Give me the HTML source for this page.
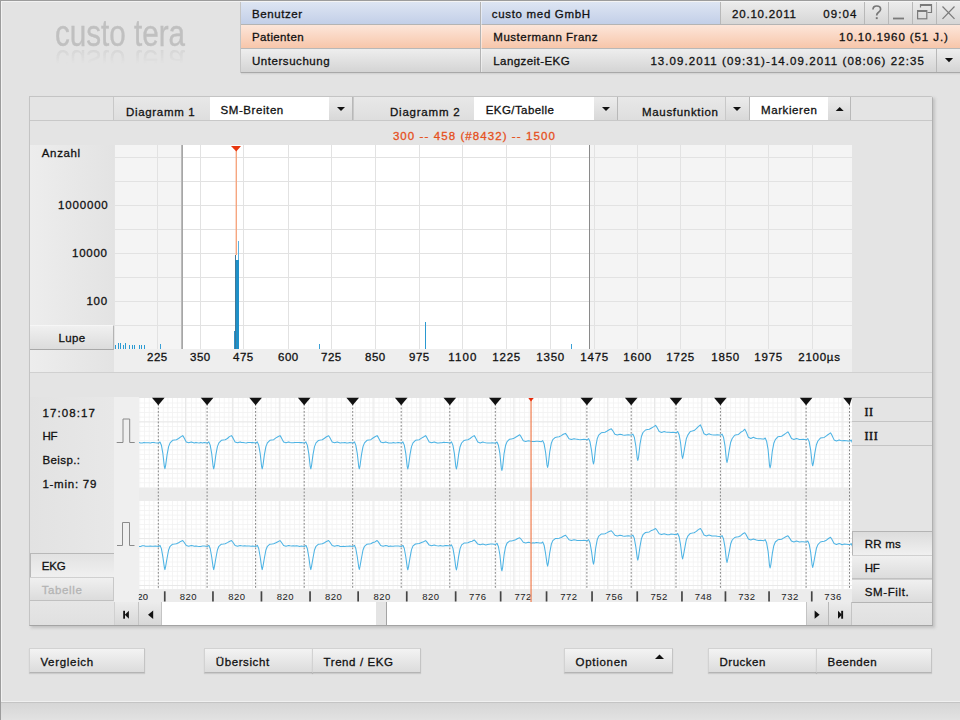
<!DOCTYPE html><html><head><meta charset="utf-8"><style>
html,body{margin:0;padding:0;}
body{width:960px;height:720px;overflow:hidden;position:relative;background:#e3e3e3;font-family:"Liberation Sans",sans-serif;}
.t{position:absolute;white-space:nowrap;-webkit-text-stroke:0.3px currentColor;}
.r{position:absolute;box-sizing:border-box;}
svg{position:absolute;left:0;top:0;}
</style></head><body>
<div class="r" style="left:0px;top:0px;width:960px;height:1px;background:#9c9c9c"></div>
<div class="r" style="left:0px;top:1px;width:960px;height:1px;background:#f2f2f2"></div>
<div class="r" style="left:0px;top:0px;width:1px;height:720px;background:#9c9c9c"></div>
<div class="r" style="left:1px;top:1px;width:1px;height:719px;background:#f2f2f2"></div>
<div class="r" style="left:1px;top:701px;width:959px;height:1px;background:#f0f0f0"></div>
<div class="r" style="left:1px;top:702px;width:959px;height:1px;background:#c4c4c4"></div>
<div class="r" style="left:1px;top:703px;width:959px;height:17px;background:linear-gradient(#d6d6d6,#e2e2e2)"></div>
<div class="t" style="left:55px;top:12px;font-size:36px;line-height:44px;color:#c0c0c0;transform:scaleX(0.823);transform-origin:0 0;-webkit-text-stroke:0.35px #c0c0c0">custo tera</div>
<div class="t" style="left:55px;top:12px;font-size:36px;line-height:44px;color:#c0c0c0;transform:scaleX(0.823) scaleY(-0.9);transform-origin:0 36px;opacity:0.38;-webkit-text-stroke:0;-webkit-mask-image:linear-gradient(to bottom,rgba(0,0,0,0) 0%,rgba(0,0,0,0) 40%,rgba(0,0,0,1) 78%)">custo tera</div>
<div class="r" style="left:241px;top:1px;width:719px;height:1px;background:#f4f4f4"></div>
<div class="r" style="left:241px;top:2px;width:239px;height:22px;background:linear-gradient(#dde5f3,#c3cfe8)"></div>
<div class="r" style="left:481px;top:2px;width:240px;height:22px;background:linear-gradient(#dde5f3,#c3cfe8)"></div>
<div class="r" style="left:721px;top:2px;width:144px;height:22px;background:linear-gradient(#ececec,#d6d6d6)"></div>
<div class="r" style="left:865px;top:2px;width:24px;height:22px;background:linear-gradient(#ececec,#d6d6d6)"></div>
<div class="r" style="left:889px;top:2px;width:24px;height:22px;background:linear-gradient(#ececec,#d6d6d6)"></div>
<div class="r" style="left:913px;top:2px;width:24px;height:22px;background:linear-gradient(#ececec,#d6d6d6)"></div>
<div class="r" style="left:937px;top:2px;width:23px;height:22px;background:linear-gradient(#ececec,#d6d6d6)"></div>
<div class="r" style="left:720px;top:2px;width:1px;height:22px;background:#b8b8b8"></div>
<div class="r" style="left:864px;top:2px;width:1px;height:22px;background:#b8b8b8"></div>
<div class="r" style="left:888px;top:2px;width:1px;height:22px;background:#b8b8b8"></div>
<div class="r" style="left:912px;top:2px;width:1px;height:22px;background:#b8b8b8"></div>
<div class="r" style="left:936px;top:2px;width:1px;height:22px;background:#b8b8b8"></div>
<div class="r" style="left:241px;top:24px;width:719px;height:1px;background:#b4b4b4"></div>
<div class="r" style="left:241px;top:25px;width:719px;height:23px;background:linear-gradient(#fde6da,#f7c6aa)"></div>
<div class="r" style="left:241px;top:48px;width:719px;height:1px;background:#b8b8b8"></div>
<div class="r" style="left:241px;top:49px;width:719px;height:23px;background:linear-gradient(#eeeeee,#d4d4d4)"></div>
<div class="r" style="left:936px;top:49px;width:1px;height:23px;background:#b8b8b8"></div>
<div class="r" style="left:241px;top:72px;width:719px;height:1px;background:#a8a8a8"></div>
<div class="r" style="left:241px;top:73px;width:719px;height:2px;background:linear-gradient(#cfcfcf,#e3e3e3)"></div>
<div class="r" style="left:240px;top:2px;width:1px;height:71px;background:#c4c4c4"></div>
<div class="r" style="left:480px;top:2px;width:1px;height:70px;background:#b4b4b4"></div>
<div class="r" style="left:481px;top:2px;width:1px;height:70px;background:rgba(255,255,255,0.45)"></div>
<div class="t" style="left:252.00px;top:9.00px;font-size:11.5px;line-height:11.5px;letter-spacing:0.571px;color:#111;font-weight:400;">Benutzer</div>
<div class="t" style="left:252.00px;top:32.00px;font-size:11.5px;line-height:11.5px;letter-spacing:0.375px;color:#111;font-weight:400;">Patienten</div>
<div class="t" style="left:252.00px;top:56.00px;font-size:11.5px;line-height:11.5px;letter-spacing:0.545px;color:#111;font-weight:400;">Untersuchung</div>
<div class="t" style="left:491.70px;top:8.50px;font-size:11.5px;line-height:11.5px;letter-spacing:0.692px;color:#111;font-weight:400;">custo med GmbH</div>
<div class="t" style="left:493.30px;top:31.80px;font-size:11.5px;line-height:11.5px;letter-spacing:0.513px;color:#111;font-weight:400;">Mustermann Franz</div>
<div class="t" style="left:493.30px;top:55.70px;font-size:11.5px;line-height:11.5px;letter-spacing:0.427px;color:#111;font-weight:400;">Langzeit-EKG</div>
<div class="t" style="left:732.00px;top:8.50px;font-size:11.5px;line-height:11.5px;letter-spacing:0.800px;color:#111;font-weight:400;">20.10.2011</div>
<div class="t" style="left:823.30px;top:8.50px;font-size:11.5px;line-height:11.5px;letter-spacing:1.075px;color:#111;font-weight:400;">09:04</div>
<div class="t" style="left:839.10px;top:31.80px;font-size:11.5px;line-height:11.5px;letter-spacing:0.906px;color:#111;font-weight:400;">10.10.1960 (51 J.)</div>
<div class="t" style="left:650.40px;top:55.70px;font-size:11.5px;line-height:11.5px;letter-spacing:1.071px;color:#111;font-weight:400;">13.09.2011 (09:31)-14.09.2011 (08:06) 22:35</div>
<div class="r" style="left:31px;top:98px;width:904px;height:530px;background:#c2c2c2;filter:blur(1.5px)"></div>
<div class="r" style="left:29px;top:96px;width:904px;height:530px;background:#e4e4e4;border:1px solid #c4c4c4;border-right-color:#b0b0b0;border-bottom-color:#a4a4a4;border-top-right-radius:3px"></div>
<div class="r" style="left:30px;top:97px;width:902px;height:24px;background:#e4e4e4"></div>
<div class="r" style="left:30px;top:120px;width:902px;height:1px;background:#c8c8c8"></div>
<div class="r" style="left:113px;top:97px;width:1px;height:24px;background:#c8c8c8"></div>
<div class="r" style="left:114px;top:97px;width:96px;height:23px;background:linear-gradient(#e8e8e8,#dedede)"></div>
<div class="r" style="left:210px;top:97px;width:119px;height:23px;background:#fff"></div>
<div class="r" style="left:329px;top:97px;width:24px;height:23px;background:linear-gradient(#ececec,#d8d8d8);border-right:1px solid #b8b8b8"></div>
<div class="r" style="left:353px;top:97px;width:1px;height:23px;background:#c8c8c8"></div>
<div class="r" style="left:354px;top:97px;width:120px;height:23px;background:linear-gradient(#e8e8e8,#dedede)"></div>
<div class="r" style="left:474px;top:97px;width:120px;height:23px;background:#fff"></div>
<div class="r" style="left:594px;top:97px;width:24px;height:23px;background:linear-gradient(#ececec,#d8d8d8);border-right:1px solid #b8b8b8"></div>
<div class="r" style="left:618px;top:97px;width:107px;height:23px;background:linear-gradient(#e8e8e8,#dedede)"></div>
<div class="r" style="left:725px;top:97px;width:25px;height:23px;background:linear-gradient(#ececec,#d8d8d8);border-left:1px solid #c8c8c8;border-right:1px solid #b8b8b8"></div>
<div class="r" style="left:750px;top:97px;width:78px;height:23px;background:#fff"></div>
<div class="r" style="left:828px;top:97px;width:23px;height:23px;background:linear-gradient(#ececec,#d8d8d8);border-right:1px solid #b8b8b8"></div>
<div class="t" style="left:126.00px;top:107.00px;font-size:11.5px;line-height:11.5px;letter-spacing:0.667px;color:#111;font-weight:400;">Diagramm 1</div>
<div class="t" style="left:220.50px;top:104.75px;font-size:11.5px;line-height:11.5px;letter-spacing:0.583px;color:#111;font-weight:400;">SM-Breiten</div>
<div class="t" style="left:390.00px;top:107.00px;font-size:11.5px;line-height:11.5px;letter-spacing:0.778px;color:#111;font-weight:400;">Diagramm 2</div>
<div class="t" style="left:485.75px;top:104.75px;font-size:11.5px;line-height:11.5px;letter-spacing:0.425px;color:#111;font-weight:400;">EKG/Tabelle</div>
<div class="t" style="left:642.00px;top:106.70px;font-size:11.5px;line-height:11.5px;letter-spacing:0.682px;color:#111;font-weight:400;">Mausfunktion</div>
<div class="t" style="left:761.00px;top:104.75px;font-size:11.5px;line-height:11.5px;letter-spacing:0.588px;color:#111;font-weight:400;">Markieren</div>
<div class="t" style="left:392.90px;top:131.20px;font-size:11.5px;line-height:11.5px;letter-spacing:1.080px;color:#e5501c;font-weight:400;">300 -- 458 (#8432) -- 1500</div>
<div class="r" style="left:30px;top:145px;width:84px;height:228px;background:linear-gradient(90deg,#ededed,#e3e3e3)"></div>
<div class="r" style="left:115px;top:145px;width:67px;height:204px;background:#f4f4f4"></div>
<div class="r" style="left:182px;top:145px;width:407px;height:204px;background:#fff"></div>
<div class="r" style="left:589px;top:145px;width:263px;height:204px;background:#f4f4f4"></div>
<div class="r" style="left:115px;top:157px;width:737px;height:1px;background:#e2e2e2"></div>
<div class="r" style="left:115px;top:181px;width:737px;height:1px;background:#e2e2e2"></div>
<div class="r" style="left:115px;top:205px;width:737px;height:1px;background:#e2e2e2"></div>
<div class="r" style="left:115px;top:229px;width:737px;height:1px;background:#e2e2e2"></div>
<div class="r" style="left:115px;top:253px;width:737px;height:1px;background:#e2e2e2"></div>
<div class="r" style="left:115px;top:277px;width:737px;height:1px;background:#e2e2e2"></div>
<div class="r" style="left:115px;top:301px;width:737px;height:1px;background:#e2e2e2"></div>
<div class="r" style="left:115px;top:325px;width:737px;height:1px;background:#e2e2e2"></div>
<div class="r" style="left:157px;top:145px;width:1px;height:204px;background:#e2e2e2"></div>
<div class="r" style="left:200px;top:145px;width:1px;height:204px;background:#e2e2e2"></div>
<div class="r" style="left:243px;top:145px;width:1px;height:204px;background:#e2e2e2"></div>
<div class="r" style="left:288px;top:145px;width:1px;height:204px;background:#e2e2e2"></div>
<div class="r" style="left:331px;top:145px;width:1px;height:204px;background:#e2e2e2"></div>
<div class="r" style="left:375px;top:145px;width:1px;height:204px;background:#e2e2e2"></div>
<div class="r" style="left:419px;top:145px;width:1px;height:204px;background:#e2e2e2"></div>
<div class="r" style="left:462px;top:145px;width:1px;height:204px;background:#e2e2e2"></div>
<div class="r" style="left:506px;top:145px;width:1px;height:204px;background:#e2e2e2"></div>
<div class="r" style="left:550px;top:145px;width:1px;height:204px;background:#e2e2e2"></div>
<div class="r" style="left:594px;top:145px;width:1px;height:204px;background:#e2e2e2"></div>
<div class="r" style="left:637px;top:145px;width:1px;height:204px;background:#e2e2e2"></div>
<div class="r" style="left:680px;top:145px;width:1px;height:204px;background:#e2e2e2"></div>
<div class="r" style="left:725px;top:145px;width:1px;height:204px;background:#e2e2e2"></div>
<div class="r" style="left:768px;top:145px;width:1px;height:204px;background:#e2e2e2"></div>
<div class="r" style="left:812px;top:145px;width:1px;height:204px;background:#e2e2e2"></div>
<div class="r" style="left:181px;top:145px;width:2px;height:204px;background:linear-gradient(90deg,#c4c4c4,#9c9c9c)"></div>
<div class="r" style="left:589px;top:145px;width:1px;height:204px;background:#8a8a8a"></div>
<div class="r" style="left:115px;top:345px;width:1.4px;height:4px;background:#2a9ad2"></div>
<div class="r" style="left:118px;top:343px;width:1.4px;height:6px;background:#2a9ad2"></div>
<div class="r" style="left:120px;top:343px;width:1.4px;height:6px;background:#2a9ad2"></div>
<div class="r" style="left:122.5px;top:345px;width:1.4px;height:4px;background:#2a9ad2"></div>
<div class="r" style="left:125px;top:343px;width:1.4px;height:6px;background:#2a9ad2"></div>
<div class="r" style="left:128.5px;top:345px;width:1.4px;height:4px;background:#2a9ad2"></div>
<div class="r" style="left:132px;top:345px;width:1.4px;height:4px;background:#2a9ad2"></div>
<div class="r" style="left:134px;top:345px;width:1.4px;height:4px;background:#2a9ad2"></div>
<div class="r" style="left:139px;top:345px;width:1.4px;height:4px;background:#2a9ad2"></div>
<div class="r" style="left:141px;top:345px;width:1.4px;height:4px;background:#2a9ad2"></div>
<div class="r" style="left:143.5px;top:345px;width:1.4px;height:4px;background:#2a9ad2"></div>
<div class="r" style="left:160px;top:344px;width:1px;height:5px;background:#3aa0d6"></div>
<div class="r" style="left:319px;top:344px;width:1px;height:5px;background:#3aa0d6"></div>
<div class="r" style="left:425px;top:322px;width:1px;height:27px;background:#2a98d0"></div>
<div class="r" style="left:571px;top:344px;width:1px;height:5px;background:#3aa0d6"></div>
<div class="r" style="left:234px;top:331px;width:1px;height:18px;background:#2a90c8"></div>
<div class="r" style="left:234.8px;top:255px;width:1.6px;height:94px;background:#3f7898"></div>
<div class="r" style="left:236.4px;top:260px;width:2.6px;height:89px;background:#1e90c8"></div>
<div class="r" style="left:238.2px;top:241px;width:1px;height:19px;background:#5ab2e2"></div>
<div class="t" style="left:41.80px;top:147.80px;font-size:11.5px;line-height:11.5px;letter-spacing:0.640px;color:#111;font-weight:400;">Anzahl</div>
<div class="t" style="left:58.00px;top:199.80px;font-size:11.5px;line-height:11.5px;letter-spacing:0.833px;color:#111;font-weight:400;">1000000</div>
<div class="t" style="left:72.00px;top:248.00px;font-size:11.5px;line-height:11.5px;letter-spacing:0.750px;color:#111;font-weight:400;">10000</div>
<div class="t" style="left:86.40px;top:296.00px;font-size:11.5px;line-height:11.5px;letter-spacing:0.800px;color:#111;font-weight:400;">100</div>
<div class="r" style="left:30px;top:325px;width:84px;height:25px;background:linear-gradient(#f0f0f0,#dcdcdc);border-top:1px solid #f6f6f6;border-bottom:1px solid #a8a8a8;border-right:1px solid #b4b4b4"></div>
<div class="t" style="left:58.50px;top:333.00px;font-size:11.5px;line-height:11.5px;letter-spacing:0.333px;color:#111;font-weight:400;">Lupe</div>
<div class="r" style="left:114px;top:349px;width:738px;height:24px;background:#eeeeee"></div>
<div class="t" style="left:146.95px;top:352.00px;font-size:11.5px;line-height:11.5px;letter-spacing:0.550px;color:#111;font-weight:400;">225</div>
<div class="t" style="left:189.95px;top:352.00px;font-size:11.5px;line-height:11.5px;letter-spacing:0.550px;color:#111;font-weight:400;">350</div>
<div class="t" style="left:232.95px;top:352.00px;font-size:11.5px;line-height:11.5px;letter-spacing:0.550px;color:#111;font-weight:400;">475</div>
<div class="t" style="left:277.95px;top:352.00px;font-size:11.5px;line-height:11.5px;letter-spacing:0.550px;color:#111;font-weight:400;">600</div>
<div class="t" style="left:320.95px;top:352.00px;font-size:11.5px;line-height:11.5px;letter-spacing:0.550px;color:#111;font-weight:400;">725</div>
<div class="t" style="left:364.95px;top:352.00px;font-size:11.5px;line-height:11.5px;letter-spacing:0.550px;color:#111;font-weight:400;">850</div>
<div class="t" style="left:408.95px;top:352.00px;font-size:11.5px;line-height:11.5px;letter-spacing:0.550px;color:#111;font-weight:400;">975</div>
<div class="t" style="left:448.35px;top:352.00px;font-size:11.5px;line-height:11.5px;letter-spacing:1.100px;color:#111;font-weight:400;">1100</div>
<div class="t" style="left:492.35px;top:352.00px;font-size:11.5px;line-height:11.5px;letter-spacing:0.767px;color:#111;font-weight:400;">1225</div>
<div class="t" style="left:536.35px;top:352.00px;font-size:11.5px;line-height:11.5px;letter-spacing:0.767px;color:#111;font-weight:400;">1350</div>
<div class="t" style="left:580.35px;top:352.00px;font-size:11.5px;line-height:11.5px;letter-spacing:0.767px;color:#111;font-weight:400;">1475</div>
<div class="t" style="left:623.35px;top:352.00px;font-size:11.5px;line-height:11.5px;letter-spacing:0.767px;color:#111;font-weight:400;">1600</div>
<div class="t" style="left:666.35px;top:352.00px;font-size:11.5px;line-height:11.5px;letter-spacing:0.767px;color:#111;font-weight:400;">1725</div>
<div class="t" style="left:711.35px;top:352.00px;font-size:11.5px;line-height:11.5px;letter-spacing:0.767px;color:#111;font-weight:400;">1850</div>
<div class="t" style="left:754.35px;top:352.00px;font-size:11.5px;line-height:11.5px;letter-spacing:0.767px;color:#111;font-weight:400;">1975</div>
<div class="t" style="left:798.30px;top:352.00px;font-size:11.5px;line-height:11.5px;letter-spacing:0.740px;color:#111;font-weight:400;">2100µs</div>
<div class="r" style="left:30px;top:372px;width:902px;height:1px;background:#d0d0d0"></div>
<div class="r" style="left:30px;top:373px;width:84px;height:180px;background:linear-gradient(90deg,#e2e2e2,#e8e8e8)"></div>
<div class="r" style="left:30px;top:373px;width:902px;height:24px;background:#e4e4e4"></div>
<div class="r" style="left:114px;top:397px;width:25px;height:205px;background:#efefef"></div>
<div class="r" style="left:139px;top:398px;width:713px;height:90px;background:#fff"></div>
<div class="r" style="left:139px;top:501px;width:713px;height:88px;background:#fff"></div>
<div class="r" style="left:139px;top:488px;width:713px;height:13px;background:#ececec"></div>
<div class="r" style="left:139px;top:589px;width:713px;height:13px;background:#ececec"></div>
<div class="t" style="left:179.80px;top:591.60px;font-size:9.5px;line-height:9.5px;letter-spacing:0.500px;color:#222;font-weight:400;-webkit-text-stroke:0">820</div>
<div class="t" style="left:228.15px;top:591.60px;font-size:9.5px;line-height:9.5px;letter-spacing:0.500px;color:#222;font-weight:400;-webkit-text-stroke:0">820</div>
<div class="t" style="left:276.70px;top:591.60px;font-size:9.5px;line-height:9.5px;letter-spacing:0.500px;color:#222;font-weight:400;-webkit-text-stroke:0">820</div>
<div class="t" style="left:325.05px;top:591.60px;font-size:9.5px;line-height:9.5px;letter-spacing:0.500px;color:#222;font-weight:400;-webkit-text-stroke:0">820</div>
<div class="t" style="left:373.40px;top:591.60px;font-size:9.5px;line-height:9.5px;letter-spacing:0.500px;color:#222;font-weight:400;-webkit-text-stroke:0">820</div>
<div class="t" style="left:422.15px;top:591.60px;font-size:9.5px;line-height:9.5px;letter-spacing:0.500px;color:#222;font-weight:400;-webkit-text-stroke:0">820</div>
<div class="t" style="left:469.10px;top:591.60px;font-size:9.5px;line-height:9.5px;letter-spacing:0.500px;color:#222;font-weight:400;-webkit-text-stroke:0">776</div>
<div class="t" style="left:514.55px;top:591.60px;font-size:9.5px;line-height:9.5px;letter-spacing:0.500px;color:#222;font-weight:400;-webkit-text-stroke:0">772</div>
<div class="t" style="left:560.25px;top:591.60px;font-size:9.5px;line-height:9.5px;letter-spacing:0.500px;color:#222;font-weight:400;-webkit-text-stroke:0">772</div>
<div class="t" style="left:605.60px;top:591.60px;font-size:9.5px;line-height:9.5px;letter-spacing:0.500px;color:#222;font-weight:400;-webkit-text-stroke:0">756</div>
<div class="t" style="left:650.55px;top:591.60px;font-size:9.5px;line-height:9.5px;letter-spacing:0.500px;color:#222;font-weight:400;-webkit-text-stroke:0">752</div>
<div class="t" style="left:694.65px;top:591.60px;font-size:9.5px;line-height:9.5px;letter-spacing:0.500px;color:#222;font-weight:400;-webkit-text-stroke:0">748</div>
<div class="t" style="left:738.20px;top:591.60px;font-size:9.5px;line-height:9.5px;letter-spacing:0.500px;color:#222;font-weight:400;-webkit-text-stroke:0">732</div>
<div class="t" style="left:781.35px;top:591.60px;font-size:9.5px;line-height:9.5px;letter-spacing:0.500px;color:#222;font-weight:400;-webkit-text-stroke:0">732</div>
<div class="t" style="left:824.35px;top:591.60px;font-size:9.5px;line-height:9.5px;letter-spacing:0.500px;color:#222;font-weight:400;-webkit-text-stroke:0">736</div>
<div class="t" style="left:137.30px;top:591.60px;font-size:9.5px;line-height:9.5px;letter-spacing:0.200px;color:#2a2a2a;font-weight:400;-webkit-text-stroke:0.15px #2a2a2a;clip-path:inset(0 0 0 1.5px)">20</div>
<div class="t" style="left:42.40px;top:407.60px;font-size:11.5px;line-height:11.5px;letter-spacing:1.100px;color:#111;font-weight:400;">17:08:17</div>
<div class="t" style="left:42.40px;top:431.00px;font-size:11.5px;line-height:11.5px;letter-spacing:-0.150px;color:#111;font-weight:400;">HF</div>
<div class="t" style="left:42.40px;top:455.20px;font-size:11.5px;line-height:11.5px;letter-spacing:0.417px;color:#111;font-weight:400;">Beisp.:</div>
<div class="t" style="left:42.40px;top:479.20px;font-size:11.5px;line-height:11.5px;letter-spacing:0.750px;color:#111;font-weight:400;">1-min: 79</div>
<div class="r" style="left:30px;top:553px;width:84px;height:24px;background:linear-gradient(#e2e2e2,#f0f0f0);border-top:1px solid #b8b8b8;border-left:1px solid #b8b8b8"></div>
<div class="t" style="left:41.70px;top:560.90px;font-size:11.5px;line-height:11.5px;letter-spacing:-0.150px;color:#111;font-weight:400;">EKG</div>
<div class="r" style="left:30px;top:577px;width:84px;height:24px;background:linear-gradient(#f0f0f0,#dcdcdc);border-top:1px solid #d0d0d0;border-bottom:1px solid #c0c0c0;border-right:1px solid #c8c8c8"></div>
<div class="t" style="left:41.70px;top:584.50px;font-size:11.5px;line-height:11.5px;letter-spacing:0.617px;color:#b4b4b4;font-weight:400;">Tabelle</div>
<div class="r" style="left:30px;top:601px;width:84px;height:24px;background:linear-gradient(#e6e6e6,#e0e0e0)"></div>
<div class="r" style="left:114px;top:602px;width:738px;height:23px;background:#fff"></div>
<div class="r" style="left:114px;top:602px;width:25px;height:23px;background:linear-gradient(#ececec,#d8d8d8);border-right:1px solid #c4c4c4;border-left:1px solid #d0d0d0"></div>
<div class="r" style="left:139px;top:602px;width:23px;height:23px;background:linear-gradient(#ececec,#d8d8d8);border-right:1px solid #c4c4c4"></div>
<div class="r" style="left:376px;top:602px;width:11px;height:23px;background:#e4e4e4;border-right:1px solid #a4a4a4"></div>
<div class="r" style="left:806px;top:602px;width:22px;height:23px;background:linear-gradient(#ececec,#d8d8d8);border-left:1px solid #c4c4c4"></div>
<div class="r" style="left:828px;top:602px;width:24px;height:23px;background:linear-gradient(#ececec,#d8d8d8);border-left:1px solid #b8b8b8;border-right:1px solid #c4c4c4"></div>
<div class="r" style="left:852px;top:397px;width:80px;height:228px;background:#e4e4e4"></div>
<div class="r" style="left:852px;top:397px;width:80px;height:1px;background:#c4c4c4"></div>
<div class="r" style="left:852px;top:421px;width:80px;height:1px;background:#c4c4c4"></div>
<div class="r" style="left:852px;top:445px;width:80px;height:1px;background:#c4c4c4"></div>
<div class="r" style="left:852px;top:531px;width:80px;height:24px;background:linear-gradient(#dcdcdc,#f0f0f0);border-top:1px solid #b4b4b4;border-left:1px solid #b4b4b4"></div>
<div class="r" style="left:852px;top:555px;width:80px;height:24px;background:linear-gradient(#f0f0f0,#dcdcdc);border-top:1px solid #d0d0d0;border-bottom:1px solid #c0c0c0"></div>
<div class="r" style="left:852px;top:579px;width:80px;height:24px;background:linear-gradient(#f0f0f0,#dcdcdc);border-top:1px solid #d0d0d0;border-bottom:1px solid #b4b4b4"></div>
<div class="r" style="left:852px;top:603px;width:80px;height:22px;background:linear-gradient(#e6e6e6,#e0e0e0)"></div>
<div class="t" style="left:864.5px;top:406px;font-size:12px;line-height:12px;font-family:'Liberation Serif',serif;font-weight:400;-webkit-text-stroke:0.45px #111;color:#111;letter-spacing:0.6px">II</div>
<div class="t" style="left:864.5px;top:430px;font-size:12px;line-height:12px;font-family:'Liberation Serif',serif;font-weight:400;-webkit-text-stroke:0.45px #111;color:#111;letter-spacing:0.6px">III</div>
<div class="t" style="left:864.70px;top:538.50px;font-size:11.5px;line-height:11.5px;letter-spacing:0.250px;color:#111;font-weight:400;">RR ms</div>
<div class="t" style="left:864.70px;top:562.70px;font-size:11.5px;line-height:11.5px;letter-spacing:-0.150px;color:#111;font-weight:400;">HF</div>
<div class="t" style="left:864.70px;top:586.80px;font-size:11.5px;line-height:11.5px;letter-spacing:0.643px;color:#111;font-weight:400;">SM-Filt.</div>
<div class="r" style="left:29px;top:648px;width:116px;height:25px;background:linear-gradient(#f3f3f3,#dcdcdc);border:1px solid #d2d2d2;border-bottom-color:#b4b4b4;border-right-color:#c4c4c4;box-shadow:0 1px 1px rgba(0,0,0,0.10)"></div>
<div class="t" style="left:40.40px;top:656.50px;font-size:11.5px;line-height:11.5px;letter-spacing:0.688px;color:#111;font-weight:400;">Vergleich</div>
<div class="r" style="left:204px;top:648px;width:109px;height:25px;background:linear-gradient(#f3f3f3,#dcdcdc);border:1px solid #d2d2d2;border-bottom-color:#b4b4b4;border-right-color:#c4c4c4;box-shadow:0 1px 1px rgba(0,0,0,0.10)"></div>
<div class="t" style="left:215.75px;top:656.50px;font-size:11.5px;line-height:11.5px;letter-spacing:0.594px;color:#111;font-weight:400;">Übersicht</div>
<div class="r" style="left:312px;top:648px;width:109px;height:25px;background:linear-gradient(#f3f3f3,#dcdcdc);border:1px solid #d2d2d2;border-bottom-color:#b4b4b4;border-right-color:#c4c4c4;box-shadow:0 1px 1px rgba(0,0,0,0.10)"></div>
<div class="t" style="left:323.50px;top:656.50px;font-size:11.5px;line-height:11.5px;letter-spacing:0.600px;color:#111;font-weight:400;">Trend / EKG</div>
<div class="r" style="left:564px;top:648px;width:109px;height:25px;background:linear-gradient(#f3f3f3,#dcdcdc);border:1px solid #d2d2d2;border-bottom-color:#b4b4b4;border-right-color:#c4c4c4;box-shadow:0 1px 1px rgba(0,0,0,0.10)"></div>
<div class="t" style="left:575.50px;top:656.50px;font-size:11.5px;line-height:11.5px;letter-spacing:0.714px;color:#111;font-weight:400;">Optionen</div>
<div class="r" style="left:708px;top:648px;width:109px;height:25px;background:linear-gradient(#f3f3f3,#dcdcdc);border:1px solid #d2d2d2;border-bottom-color:#b4b4b4;border-right-color:#c4c4c4;box-shadow:0 1px 1px rgba(0,0,0,0.10)"></div>
<div class="t" style="left:719.50px;top:656.50px;font-size:11.5px;line-height:11.5px;letter-spacing:0.500px;color:#111;font-weight:400;">Drucken</div>
<div class="r" style="left:816px;top:648px;width:116px;height:25px;background:linear-gradient(#f3f3f3,#dcdcdc);border:1px solid #d2d2d2;border-bottom-color:#b4b4b4;border-right-color:#c4c4c4;box-shadow:0 1px 1px rgba(0,0,0,0.10)"></div>
<div class="t" style="left:827.50px;top:656.50px;font-size:11.5px;line-height:11.5px;letter-spacing:0.500px;color:#111;font-weight:400;">Beenden</div>
<svg width="960" height="720"><path d="M873,9.6 C873,7 874.6,6 876.7,6 C879,6 880.6,7.3 880.6,9.3 C880.6,11.2 879.2,11.9 878,12.7 C877,13.4 876.7,14 876.7,15.6" fill="none" stroke="#777" stroke-width="1.7"/><rect x="875.8" y="17.2" width="1.9" height="1.9" fill="#777"/><rect x="893" y="17.6" width="11" height="1.8" fill="#7a7a7a"/><path d="M920.5,7.5 v-3 h11 v8 h-4" fill="none" stroke="#7a7a7a" stroke-width="1.2"/><rect x="917.6" y="10.6" width="9.2" height="8.2" fill="none" stroke="#7a7a7a" stroke-width="1.2"/><rect x="921" y="4" width="11" height="2" fill="#7a7a7a"/><rect x="917" y="10" width="10" height="2" fill="#7a7a7a"/><path d="M942.5,6.5 L954.5,18.8 M954.5,6.5 L942.5,18.8" stroke="#7a7a7a" stroke-width="1.2"/><polygon points="944.9,57.9 953.1,57.9 949,62.300000000000004" fill="#111"/><polygon points="337.0,107.0 345.0,107.0 341,111.0" fill="#111"/><polygon points="602.0,107.0 610.0,107.0 606,111.0" fill="#111"/><polygon points="733.0,107.0 741.0,107.0 737,111.0" fill="#111"/><polygon points="835.7,111.0 843.7,111.0 839.7,107.0" fill="#111"/><rect x="235.6" y="146" width="1.4" height="109" fill="#f6a680"/><polygon points="231,146 241,146 236.3,151.5" fill="#e8360e"/><rect x="139.4" y="398" width="0.8" height="90" fill="#f2f2f2"/><rect x="144.1" y="398" width="0.8" height="90" fill="#f2f2f2"/><rect x="148.8" y="398" width="0.8" height="90" fill="#f2f2f2"/><rect x="153.5" y="398" width="0.8" height="90" fill="#f2f2f2"/><rect x="158.2" y="398" width="0.8" height="90" fill="#f2f2f2"/><rect x="162.8" y="398" width="0.8" height="90" fill="#f2f2f2"/><rect x="167.5" y="398" width="0.8" height="90" fill="#f2f2f2"/><rect x="172.2" y="398" width="0.8" height="90" fill="#f2f2f2"/><rect x="176.9" y="398" width="0.8" height="90" fill="#f2f2f2"/><rect x="181.6" y="398" width="0.8" height="90" fill="#f2f2f2"/><rect x="186.3" y="398" width="0.8" height="90" fill="#f2f2f2"/><rect x="191.0" y="398" width="0.8" height="90" fill="#f2f2f2"/><rect x="195.7" y="398" width="0.8" height="90" fill="#f2f2f2"/><rect x="200.4" y="398" width="0.8" height="90" fill="#f2f2f2"/><rect x="205.1" y="398" width="0.8" height="90" fill="#f2f2f2"/><rect x="209.7" y="398" width="0.8" height="90" fill="#f2f2f2"/><rect x="214.4" y="398" width="0.8" height="90" fill="#f2f2f2"/><rect x="219.1" y="398" width="0.8" height="90" fill="#f2f2f2"/><rect x="223.8" y="398" width="0.8" height="90" fill="#f2f2f2"/><rect x="228.5" y="398" width="0.8" height="90" fill="#f2f2f2"/><rect x="233.2" y="398" width="0.8" height="90" fill="#f2f2f2"/><rect x="237.9" y="398" width="0.8" height="90" fill="#f2f2f2"/><rect x="242.6" y="398" width="0.8" height="90" fill="#f2f2f2"/><rect x="247.3" y="398" width="0.8" height="90" fill="#f2f2f2"/><rect x="252.0" y="398" width="0.8" height="90" fill="#f2f2f2"/><rect x="256.6" y="398" width="0.8" height="90" fill="#f2f2f2"/><rect x="261.3" y="398" width="0.8" height="90" fill="#f2f2f2"/><rect x="266.0" y="398" width="0.8" height="90" fill="#f2f2f2"/><rect x="270.7" y="398" width="0.8" height="90" fill="#f2f2f2"/><rect x="275.4" y="398" width="0.8" height="90" fill="#f2f2f2"/><rect x="280.1" y="398" width="0.8" height="90" fill="#f2f2f2"/><rect x="284.8" y="398" width="0.8" height="90" fill="#f2f2f2"/><rect x="289.5" y="398" width="0.8" height="90" fill="#f2f2f2"/><rect x="294.2" y="398" width="0.8" height="90" fill="#f2f2f2"/><rect x="298.9" y="398" width="0.8" height="90" fill="#f2f2f2"/><rect x="303.5" y="398" width="0.8" height="90" fill="#f2f2f2"/><rect x="308.2" y="398" width="0.8" height="90" fill="#f2f2f2"/><rect x="312.9" y="398" width="0.8" height="90" fill="#f2f2f2"/><rect x="317.6" y="398" width="0.8" height="90" fill="#f2f2f2"/><rect x="322.3" y="398" width="0.8" height="90" fill="#f2f2f2"/><rect x="327.0" y="398" width="0.8" height="90" fill="#f2f2f2"/><rect x="331.7" y="398" width="0.8" height="90" fill="#f2f2f2"/><rect x="336.4" y="398" width="0.8" height="90" fill="#f2f2f2"/><rect x="341.1" y="398" width="0.8" height="90" fill="#f2f2f2"/><rect x="345.8" y="398" width="0.8" height="90" fill="#f2f2f2"/><rect x="350.4" y="398" width="0.8" height="90" fill="#f2f2f2"/><rect x="355.1" y="398" width="0.8" height="90" fill="#f2f2f2"/><rect x="359.8" y="398" width="0.8" height="90" fill="#f2f2f2"/><rect x="364.5" y="398" width="0.8" height="90" fill="#f2f2f2"/><rect x="369.2" y="398" width="0.8" height="90" fill="#f2f2f2"/><rect x="373.9" y="398" width="0.8" height="90" fill="#f2f2f2"/><rect x="378.6" y="398" width="0.8" height="90" fill="#f2f2f2"/><rect x="383.3" y="398" width="0.8" height="90" fill="#f2f2f2"/><rect x="388.0" y="398" width="0.8" height="90" fill="#f2f2f2"/><rect x="392.7" y="398" width="0.8" height="90" fill="#f2f2f2"/><rect x="397.3" y="398" width="0.8" height="90" fill="#f2f2f2"/><rect x="402.0" y="398" width="0.8" height="90" fill="#f2f2f2"/><rect x="406.7" y="398" width="0.8" height="90" fill="#f2f2f2"/><rect x="411.4" y="398" width="0.8" height="90" fill="#f2f2f2"/><rect x="416.1" y="398" width="0.8" height="90" fill="#f2f2f2"/><rect x="420.8" y="398" width="0.8" height="90" fill="#f2f2f2"/><rect x="425.5" y="398" width="0.8" height="90" fill="#f2f2f2"/><rect x="430.2" y="398" width="0.8" height="90" fill="#f2f2f2"/><rect x="434.9" y="398" width="0.8" height="90" fill="#f2f2f2"/><rect x="439.6" y="398" width="0.8" height="90" fill="#f2f2f2"/><rect x="444.2" y="398" width="0.8" height="90" fill="#f2f2f2"/><rect x="448.9" y="398" width="0.8" height="90" fill="#f2f2f2"/><rect x="453.6" y="398" width="0.8" height="90" fill="#f2f2f2"/><rect x="458.3" y="398" width="0.8" height="90" fill="#f2f2f2"/><rect x="463.0" y="398" width="0.8" height="90" fill="#f2f2f2"/><rect x="467.7" y="398" width="0.8" height="90" fill="#f2f2f2"/><rect x="472.4" y="398" width="0.8" height="90" fill="#f2f2f2"/><rect x="477.1" y="398" width="0.8" height="90" fill="#f2f2f2"/><rect x="481.8" y="398" width="0.8" height="90" fill="#f2f2f2"/><rect x="486.5" y="398" width="0.8" height="90" fill="#f2f2f2"/><rect x="491.1" y="398" width="0.8" height="90" fill="#f2f2f2"/><rect x="495.8" y="398" width="0.8" height="90" fill="#f2f2f2"/><rect x="500.5" y="398" width="0.8" height="90" fill="#f2f2f2"/><rect x="505.2" y="398" width="0.8" height="90" fill="#f2f2f2"/><rect x="509.9" y="398" width="0.8" height="90" fill="#f2f2f2"/><rect x="514.6" y="398" width="0.8" height="90" fill="#f2f2f2"/><rect x="519.3" y="398" width="0.8" height="90" fill="#f2f2f2"/><rect x="524.0" y="398" width="0.8" height="90" fill="#f2f2f2"/><rect x="528.7" y="398" width="0.8" height="90" fill="#f2f2f2"/><rect x="533.4" y="398" width="0.8" height="90" fill="#f2f2f2"/><rect x="538.1" y="398" width="0.8" height="90" fill="#f2f2f2"/><rect x="542.7" y="398" width="0.8" height="90" fill="#f2f2f2"/><rect x="547.4" y="398" width="0.8" height="90" fill="#f2f2f2"/><rect x="552.1" y="398" width="0.8" height="90" fill="#f2f2f2"/><rect x="556.8" y="398" width="0.8" height="90" fill="#f2f2f2"/><rect x="561.5" y="398" width="0.8" height="90" fill="#f2f2f2"/><rect x="566.2" y="398" width="0.8" height="90" fill="#f2f2f2"/><rect x="570.9" y="398" width="0.8" height="90" fill="#f2f2f2"/><rect x="575.6" y="398" width="0.8" height="90" fill="#f2f2f2"/><rect x="580.3" y="398" width="0.8" height="90" fill="#f2f2f2"/><rect x="585.0" y="398" width="0.8" height="90" fill="#f2f2f2"/><rect x="589.6" y="398" width="0.8" height="90" fill="#f2f2f2"/><rect x="594.3" y="398" width="0.8" height="90" fill="#f2f2f2"/><rect x="599.0" y="398" width="0.8" height="90" fill="#f2f2f2"/><rect x="603.7" y="398" width="0.8" height="90" fill="#f2f2f2"/><rect x="608.4" y="398" width="0.8" height="90" fill="#f2f2f2"/><rect x="613.1" y="398" width="0.8" height="90" fill="#f2f2f2"/><rect x="617.8" y="398" width="0.8" height="90" fill="#f2f2f2"/><rect x="622.5" y="398" width="0.8" height="90" fill="#f2f2f2"/><rect x="627.2" y="398" width="0.8" height="90" fill="#f2f2f2"/><rect x="631.9" y="398" width="0.8" height="90" fill="#f2f2f2"/><rect x="636.5" y="398" width="0.8" height="90" fill="#f2f2f2"/><rect x="641.2" y="398" width="0.8" height="90" fill="#f2f2f2"/><rect x="645.9" y="398" width="0.8" height="90" fill="#f2f2f2"/><rect x="650.6" y="398" width="0.8" height="90" fill="#f2f2f2"/><rect x="655.3" y="398" width="0.8" height="90" fill="#f2f2f2"/><rect x="660.0" y="398" width="0.8" height="90" fill="#f2f2f2"/><rect x="664.7" y="398" width="0.8" height="90" fill="#f2f2f2"/><rect x="669.4" y="398" width="0.8" height="90" fill="#f2f2f2"/><rect x="674.1" y="398" width="0.8" height="90" fill="#f2f2f2"/><rect x="678.8" y="398" width="0.8" height="90" fill="#f2f2f2"/><rect x="683.4" y="398" width="0.8" height="90" fill="#f2f2f2"/><rect x="688.1" y="398" width="0.8" height="90" fill="#f2f2f2"/><rect x="692.8" y="398" width="0.8" height="90" fill="#f2f2f2"/><rect x="697.5" y="398" width="0.8" height="90" fill="#f2f2f2"/><rect x="702.2" y="398" width="0.8" height="90" fill="#f2f2f2"/><rect x="706.9" y="398" width="0.8" height="90" fill="#f2f2f2"/><rect x="711.6" y="398" width="0.8" height="90" fill="#f2f2f2"/><rect x="716.3" y="398" width="0.8" height="90" fill="#f2f2f2"/><rect x="721.0" y="398" width="0.8" height="90" fill="#f2f2f2"/><rect x="725.7" y="398" width="0.8" height="90" fill="#f2f2f2"/><rect x="730.3" y="398" width="0.8" height="90" fill="#f2f2f2"/><rect x="735.0" y="398" width="0.8" height="90" fill="#f2f2f2"/><rect x="739.7" y="398" width="0.8" height="90" fill="#f2f2f2"/><rect x="744.4" y="398" width="0.8" height="90" fill="#f2f2f2"/><rect x="749.1" y="398" width="0.8" height="90" fill="#f2f2f2"/><rect x="753.8" y="398" width="0.8" height="90" fill="#f2f2f2"/><rect x="758.5" y="398" width="0.8" height="90" fill="#f2f2f2"/><rect x="763.2" y="398" width="0.8" height="90" fill="#f2f2f2"/><rect x="767.9" y="398" width="0.8" height="90" fill="#f2f2f2"/><rect x="772.6" y="398" width="0.8" height="90" fill="#f2f2f2"/><rect x="777.2" y="398" width="0.8" height="90" fill="#f2f2f2"/><rect x="781.9" y="398" width="0.8" height="90" fill="#f2f2f2"/><rect x="786.6" y="398" width="0.8" height="90" fill="#f2f2f2"/><rect x="791.3" y="398" width="0.8" height="90" fill="#f2f2f2"/><rect x="796.0" y="398" width="0.8" height="90" fill="#f2f2f2"/><rect x="800.7" y="398" width="0.8" height="90" fill="#f2f2f2"/><rect x="805.4" y="398" width="0.8" height="90" fill="#f2f2f2"/><rect x="810.1" y="398" width="0.8" height="90" fill="#f2f2f2"/><rect x="814.8" y="398" width="0.8" height="90" fill="#f2f2f2"/><rect x="819.5" y="398" width="0.8" height="90" fill="#f2f2f2"/><rect x="824.1" y="398" width="0.8" height="90" fill="#f2f2f2"/><rect x="828.8" y="398" width="0.8" height="90" fill="#f2f2f2"/><rect x="833.5" y="398" width="0.8" height="90" fill="#f2f2f2"/><rect x="838.2" y="398" width="0.8" height="90" fill="#f2f2f2"/><rect x="842.9" y="398" width="0.8" height="90" fill="#f2f2f2"/><rect x="847.6" y="398" width="0.8" height="90" fill="#f2f2f2"/><rect x="139" y="402.6" width="713" height="0.8" fill="#f2f2f2"/><rect x="139" y="407.3" width="713" height="0.8" fill="#f2f2f2"/><rect x="139" y="412.0" width="713" height="0.8" fill="#f2f2f2"/><rect x="139" y="416.7" width="713" height="0.8" fill="#f2f2f2"/><rect x="139" y="421.4" width="713" height="0.8" fill="#f2f2f2"/><rect x="139" y="426.1" width="713" height="0.8" fill="#f2f2f2"/><rect x="139" y="430.8" width="713" height="0.8" fill="#f2f2f2"/><rect x="139" y="435.5" width="713" height="0.8" fill="#f2f2f2"/><rect x="139" y="440.2" width="713" height="0.8" fill="#f2f2f2"/><rect x="139" y="444.8" width="713" height="0.8" fill="#f2f2f2"/><rect x="139" y="449.5" width="713" height="0.8" fill="#f2f2f2"/><rect x="139" y="454.2" width="713" height="0.8" fill="#f2f2f2"/><rect x="139" y="458.9" width="713" height="0.8" fill="#f2f2f2"/><rect x="139" y="463.6" width="713" height="0.8" fill="#f2f2f2"/><rect x="139" y="468.3" width="713" height="0.8" fill="#f2f2f2"/><rect x="139" y="473.0" width="713" height="0.8" fill="#f2f2f2"/><rect x="139" y="477.7" width="713" height="0.8" fill="#f2f2f2"/><rect x="139" y="482.4" width="713" height="0.8" fill="#f2f2f2"/><rect x="139" y="487.1" width="713" height="0.8" fill="#f2f2f2"/><rect x="185.0" y="398" width="1" height="90" fill="#e8e8e8"/><rect x="231.9" y="398" width="1" height="90" fill="#e8e8e8"/><rect x="278.8" y="398" width="1" height="90" fill="#e8e8e8"/><rect x="325.7" y="398" width="1" height="90" fill="#e8e8e8"/><rect x="372.6" y="398" width="1" height="90" fill="#e8e8e8"/><rect x="419.5" y="398" width="1" height="90" fill="#e8e8e8"/><rect x="466.4" y="398" width="1" height="90" fill="#e8e8e8"/><rect x="513.3" y="398" width="1" height="90" fill="#e8e8e8"/><rect x="560.2" y="398" width="1" height="90" fill="#e8e8e8"/><rect x="607.1" y="398" width="1" height="90" fill="#e8e8e8"/><rect x="654.0" y="398" width="1" height="90" fill="#e8e8e8"/><rect x="700.9" y="398" width="1" height="90" fill="#e8e8e8"/><rect x="747.8" y="398" width="1" height="90" fill="#e8e8e8"/><rect x="794.7" y="398" width="1" height="90" fill="#e8e8e8"/><rect x="841.6" y="398" width="1" height="90" fill="#e8e8e8"/><rect x="139" y="421.4" width="713" height="1" fill="#e8e8e8"/><rect x="139" y="468.3" width="713" height="1" fill="#e8e8e8"/><rect x="139.4" y="501" width="0.8" height="88" fill="#f2f2f2"/><rect x="144.1" y="501" width="0.8" height="88" fill="#f2f2f2"/><rect x="148.8" y="501" width="0.8" height="88" fill="#f2f2f2"/><rect x="153.5" y="501" width="0.8" height="88" fill="#f2f2f2"/><rect x="158.2" y="501" width="0.8" height="88" fill="#f2f2f2"/><rect x="162.8" y="501" width="0.8" height="88" fill="#f2f2f2"/><rect x="167.5" y="501" width="0.8" height="88" fill="#f2f2f2"/><rect x="172.2" y="501" width="0.8" height="88" fill="#f2f2f2"/><rect x="176.9" y="501" width="0.8" height="88" fill="#f2f2f2"/><rect x="181.6" y="501" width="0.8" height="88" fill="#f2f2f2"/><rect x="186.3" y="501" width="0.8" height="88" fill="#f2f2f2"/><rect x="191.0" y="501" width="0.8" height="88" fill="#f2f2f2"/><rect x="195.7" y="501" width="0.8" height="88" fill="#f2f2f2"/><rect x="200.4" y="501" width="0.8" height="88" fill="#f2f2f2"/><rect x="205.1" y="501" width="0.8" height="88" fill="#f2f2f2"/><rect x="209.7" y="501" width="0.8" height="88" fill="#f2f2f2"/><rect x="214.4" y="501" width="0.8" height="88" fill="#f2f2f2"/><rect x="219.1" y="501" width="0.8" height="88" fill="#f2f2f2"/><rect x="223.8" y="501" width="0.8" height="88" fill="#f2f2f2"/><rect x="228.5" y="501" width="0.8" height="88" fill="#f2f2f2"/><rect x="233.2" y="501" width="0.8" height="88" fill="#f2f2f2"/><rect x="237.9" y="501" width="0.8" height="88" fill="#f2f2f2"/><rect x="242.6" y="501" width="0.8" height="88" fill="#f2f2f2"/><rect x="247.3" y="501" width="0.8" height="88" fill="#f2f2f2"/><rect x="252.0" y="501" width="0.8" height="88" fill="#f2f2f2"/><rect x="256.6" y="501" width="0.8" height="88" fill="#f2f2f2"/><rect x="261.3" y="501" width="0.8" height="88" fill="#f2f2f2"/><rect x="266.0" y="501" width="0.8" height="88" fill="#f2f2f2"/><rect x="270.7" y="501" width="0.8" height="88" fill="#f2f2f2"/><rect x="275.4" y="501" width="0.8" height="88" fill="#f2f2f2"/><rect x="280.1" y="501" width="0.8" height="88" fill="#f2f2f2"/><rect x="284.8" y="501" width="0.8" height="88" fill="#f2f2f2"/><rect x="289.5" y="501" width="0.8" height="88" fill="#f2f2f2"/><rect x="294.2" y="501" width="0.8" height="88" fill="#f2f2f2"/><rect x="298.9" y="501" width="0.8" height="88" fill="#f2f2f2"/><rect x="303.5" y="501" width="0.8" height="88" fill="#f2f2f2"/><rect x="308.2" y="501" width="0.8" height="88" fill="#f2f2f2"/><rect x="312.9" y="501" width="0.8" height="88" fill="#f2f2f2"/><rect x="317.6" y="501" width="0.8" height="88" fill="#f2f2f2"/><rect x="322.3" y="501" width="0.8" height="88" fill="#f2f2f2"/><rect x="327.0" y="501" width="0.8" height="88" fill="#f2f2f2"/><rect x="331.7" y="501" width="0.8" height="88" fill="#f2f2f2"/><rect x="336.4" y="501" width="0.8" height="88" fill="#f2f2f2"/><rect x="341.1" y="501" width="0.8" height="88" fill="#f2f2f2"/><rect x="345.8" y="501" width="0.8" height="88" fill="#f2f2f2"/><rect x="350.4" y="501" width="0.8" height="88" fill="#f2f2f2"/><rect x="355.1" y="501" width="0.8" height="88" fill="#f2f2f2"/><rect x="359.8" y="501" width="0.8" height="88" fill="#f2f2f2"/><rect x="364.5" y="501" width="0.8" height="88" fill="#f2f2f2"/><rect x="369.2" y="501" width="0.8" height="88" fill="#f2f2f2"/><rect x="373.9" y="501" width="0.8" height="88" fill="#f2f2f2"/><rect x="378.6" y="501" width="0.8" height="88" fill="#f2f2f2"/><rect x="383.3" y="501" width="0.8" height="88" fill="#f2f2f2"/><rect x="388.0" y="501" width="0.8" height="88" fill="#f2f2f2"/><rect x="392.7" y="501" width="0.8" height="88" fill="#f2f2f2"/><rect x="397.3" y="501" width="0.8" height="88" fill="#f2f2f2"/><rect x="402.0" y="501" width="0.8" height="88" fill="#f2f2f2"/><rect x="406.7" y="501" width="0.8" height="88" fill="#f2f2f2"/><rect x="411.4" y="501" width="0.8" height="88" fill="#f2f2f2"/><rect x="416.1" y="501" width="0.8" height="88" fill="#f2f2f2"/><rect x="420.8" y="501" width="0.8" height="88" fill="#f2f2f2"/><rect x="425.5" y="501" width="0.8" height="88" fill="#f2f2f2"/><rect x="430.2" y="501" width="0.8" height="88" fill="#f2f2f2"/><rect x="434.9" y="501" width="0.8" height="88" fill="#f2f2f2"/><rect x="439.6" y="501" width="0.8" height="88" fill="#f2f2f2"/><rect x="444.2" y="501" width="0.8" height="88" fill="#f2f2f2"/><rect x="448.9" y="501" width="0.8" height="88" fill="#f2f2f2"/><rect x="453.6" y="501" width="0.8" height="88" fill="#f2f2f2"/><rect x="458.3" y="501" width="0.8" height="88" fill="#f2f2f2"/><rect x="463.0" y="501" width="0.8" height="88" fill="#f2f2f2"/><rect x="467.7" y="501" width="0.8" height="88" fill="#f2f2f2"/><rect x="472.4" y="501" width="0.8" height="88" fill="#f2f2f2"/><rect x="477.1" y="501" width="0.8" height="88" fill="#f2f2f2"/><rect x="481.8" y="501" width="0.8" height="88" fill="#f2f2f2"/><rect x="486.5" y="501" width="0.8" height="88" fill="#f2f2f2"/><rect x="491.1" y="501" width="0.8" height="88" fill="#f2f2f2"/><rect x="495.8" y="501" width="0.8" height="88" fill="#f2f2f2"/><rect x="500.5" y="501" width="0.8" height="88" fill="#f2f2f2"/><rect x="505.2" y="501" width="0.8" height="88" fill="#f2f2f2"/><rect x="509.9" y="501" width="0.8" height="88" fill="#f2f2f2"/><rect x="514.6" y="501" width="0.8" height="88" fill="#f2f2f2"/><rect x="519.3" y="501" width="0.8" height="88" fill="#f2f2f2"/><rect x="524.0" y="501" width="0.8" height="88" fill="#f2f2f2"/><rect x="528.7" y="501" width="0.8" height="88" fill="#f2f2f2"/><rect x="533.4" y="501" width="0.8" height="88" fill="#f2f2f2"/><rect x="538.1" y="501" width="0.8" height="88" fill="#f2f2f2"/><rect x="542.7" y="501" width="0.8" height="88" fill="#f2f2f2"/><rect x="547.4" y="501" width="0.8" height="88" fill="#f2f2f2"/><rect x="552.1" y="501" width="0.8" height="88" fill="#f2f2f2"/><rect x="556.8" y="501" width="0.8" height="88" fill="#f2f2f2"/><rect x="561.5" y="501" width="0.8" height="88" fill="#f2f2f2"/><rect x="566.2" y="501" width="0.8" height="88" fill="#f2f2f2"/><rect x="570.9" y="501" width="0.8" height="88" fill="#f2f2f2"/><rect x="575.6" y="501" width="0.8" height="88" fill="#f2f2f2"/><rect x="580.3" y="501" width="0.8" height="88" fill="#f2f2f2"/><rect x="585.0" y="501" width="0.8" height="88" fill="#f2f2f2"/><rect x="589.6" y="501" width="0.8" height="88" fill="#f2f2f2"/><rect x="594.3" y="501" width="0.8" height="88" fill="#f2f2f2"/><rect x="599.0" y="501" width="0.8" height="88" fill="#f2f2f2"/><rect x="603.7" y="501" width="0.8" height="88" fill="#f2f2f2"/><rect x="608.4" y="501" width="0.8" height="88" fill="#f2f2f2"/><rect x="613.1" y="501" width="0.8" height="88" fill="#f2f2f2"/><rect x="617.8" y="501" width="0.8" height="88" fill="#f2f2f2"/><rect x="622.5" y="501" width="0.8" height="88" fill="#f2f2f2"/><rect x="627.2" y="501" width="0.8" height="88" fill="#f2f2f2"/><rect x="631.9" y="501" width="0.8" height="88" fill="#f2f2f2"/><rect x="636.5" y="501" width="0.8" height="88" fill="#f2f2f2"/><rect x="641.2" y="501" width="0.8" height="88" fill="#f2f2f2"/><rect x="645.9" y="501" width="0.8" height="88" fill="#f2f2f2"/><rect x="650.6" y="501" width="0.8" height="88" fill="#f2f2f2"/><rect x="655.3" y="501" width="0.8" height="88" fill="#f2f2f2"/><rect x="660.0" y="501" width="0.8" height="88" fill="#f2f2f2"/><rect x="664.7" y="501" width="0.8" height="88" fill="#f2f2f2"/><rect x="669.4" y="501" width="0.8" height="88" fill="#f2f2f2"/><rect x="674.1" y="501" width="0.8" height="88" fill="#f2f2f2"/><rect x="678.8" y="501" width="0.8" height="88" fill="#f2f2f2"/><rect x="683.4" y="501" width="0.8" height="88" fill="#f2f2f2"/><rect x="688.1" y="501" width="0.8" height="88" fill="#f2f2f2"/><rect x="692.8" y="501" width="0.8" height="88" fill="#f2f2f2"/><rect x="697.5" y="501" width="0.8" height="88" fill="#f2f2f2"/><rect x="702.2" y="501" width="0.8" height="88" fill="#f2f2f2"/><rect x="706.9" y="501" width="0.8" height="88" fill="#f2f2f2"/><rect x="711.6" y="501" width="0.8" height="88" fill="#f2f2f2"/><rect x="716.3" y="501" width="0.8" height="88" fill="#f2f2f2"/><rect x="721.0" y="501" width="0.8" height="88" fill="#f2f2f2"/><rect x="725.7" y="501" width="0.8" height="88" fill="#f2f2f2"/><rect x="730.3" y="501" width="0.8" height="88" fill="#f2f2f2"/><rect x="735.0" y="501" width="0.8" height="88" fill="#f2f2f2"/><rect x="739.7" y="501" width="0.8" height="88" fill="#f2f2f2"/><rect x="744.4" y="501" width="0.8" height="88" fill="#f2f2f2"/><rect x="749.1" y="501" width="0.8" height="88" fill="#f2f2f2"/><rect x="753.8" y="501" width="0.8" height="88" fill="#f2f2f2"/><rect x="758.5" y="501" width="0.8" height="88" fill="#f2f2f2"/><rect x="763.2" y="501" width="0.8" height="88" fill="#f2f2f2"/><rect x="767.9" y="501" width="0.8" height="88" fill="#f2f2f2"/><rect x="772.6" y="501" width="0.8" height="88" fill="#f2f2f2"/><rect x="777.2" y="501" width="0.8" height="88" fill="#f2f2f2"/><rect x="781.9" y="501" width="0.8" height="88" fill="#f2f2f2"/><rect x="786.6" y="501" width="0.8" height="88" fill="#f2f2f2"/><rect x="791.3" y="501" width="0.8" height="88" fill="#f2f2f2"/><rect x="796.0" y="501" width="0.8" height="88" fill="#f2f2f2"/><rect x="800.7" y="501" width="0.8" height="88" fill="#f2f2f2"/><rect x="805.4" y="501" width="0.8" height="88" fill="#f2f2f2"/><rect x="810.1" y="501" width="0.8" height="88" fill="#f2f2f2"/><rect x="814.8" y="501" width="0.8" height="88" fill="#f2f2f2"/><rect x="819.5" y="501" width="0.8" height="88" fill="#f2f2f2"/><rect x="824.1" y="501" width="0.8" height="88" fill="#f2f2f2"/><rect x="828.8" y="501" width="0.8" height="88" fill="#f2f2f2"/><rect x="833.5" y="501" width="0.8" height="88" fill="#f2f2f2"/><rect x="838.2" y="501" width="0.8" height="88" fill="#f2f2f2"/><rect x="842.9" y="501" width="0.8" height="88" fill="#f2f2f2"/><rect x="847.6" y="501" width="0.8" height="88" fill="#f2f2f2"/><rect x="139" y="505.3" width="713" height="0.8" fill="#f2f2f2"/><rect x="139" y="510.0" width="713" height="0.8" fill="#f2f2f2"/><rect x="139" y="514.7" width="713" height="0.8" fill="#f2f2f2"/><rect x="139" y="519.3" width="713" height="0.8" fill="#f2f2f2"/><rect x="139" y="524.0" width="713" height="0.8" fill="#f2f2f2"/><rect x="139" y="528.7" width="713" height="0.8" fill="#f2f2f2"/><rect x="139" y="533.4" width="713" height="0.8" fill="#f2f2f2"/><rect x="139" y="538.1" width="713" height="0.8" fill="#f2f2f2"/><rect x="139" y="542.8" width="713" height="0.8" fill="#f2f2f2"/><rect x="139" y="547.5" width="713" height="0.8" fill="#f2f2f2"/><rect x="139" y="552.2" width="713" height="0.8" fill="#f2f2f2"/><rect x="139" y="556.9" width="713" height="0.8" fill="#f2f2f2"/><rect x="139" y="561.6" width="713" height="0.8" fill="#f2f2f2"/><rect x="139" y="566.2" width="713" height="0.8" fill="#f2f2f2"/><rect x="139" y="570.9" width="713" height="0.8" fill="#f2f2f2"/><rect x="139" y="575.6" width="713" height="0.8" fill="#f2f2f2"/><rect x="139" y="580.3" width="713" height="0.8" fill="#f2f2f2"/><rect x="139" y="585.0" width="713" height="0.8" fill="#f2f2f2"/><rect x="185.0" y="501" width="1" height="88" fill="#e8e8e8"/><rect x="231.9" y="501" width="1" height="88" fill="#e8e8e8"/><rect x="278.8" y="501" width="1" height="88" fill="#e8e8e8"/><rect x="325.7" y="501" width="1" height="88" fill="#e8e8e8"/><rect x="372.6" y="501" width="1" height="88" fill="#e8e8e8"/><rect x="419.5" y="501" width="1" height="88" fill="#e8e8e8"/><rect x="466.4" y="501" width="1" height="88" fill="#e8e8e8"/><rect x="513.3" y="501" width="1" height="88" fill="#e8e8e8"/><rect x="560.2" y="501" width="1" height="88" fill="#e8e8e8"/><rect x="607.1" y="501" width="1" height="88" fill="#e8e8e8"/><rect x="654.0" y="501" width="1" height="88" fill="#e8e8e8"/><rect x="700.9" y="501" width="1" height="88" fill="#e8e8e8"/><rect x="747.8" y="501" width="1" height="88" fill="#e8e8e8"/><rect x="794.7" y="501" width="1" height="88" fill="#e8e8e8"/><rect x="841.6" y="501" width="1" height="88" fill="#e8e8e8"/><rect x="139" y="538.1" width="713" height="1" fill="#e8e8e8"/><rect x="139" y="585.0" width="713" height="1" fill="#e8e8e8"/><line x1="158.3" y1="404" x2="158.3" y2="589" stroke="#858585" stroke-width="1" stroke-dasharray="1.8,1.7"/><polygon points="152.0,397.8 164.6,397.8 158.3,405.3" fill="#111"/><line x1="207.1" y1="404" x2="207.1" y2="589" stroke="#858585" stroke-width="1" stroke-dasharray="1.8,1.7"/><polygon points="200.8,397.8 213.4,397.8 207.1,405.3" fill="#111"/><line x1="255.6" y1="404" x2="255.6" y2="589" stroke="#858585" stroke-width="1" stroke-dasharray="1.8,1.7"/><polygon points="249.3,397.8 261.9,397.8 255.6,405.3" fill="#111"/><line x1="304.2" y1="404" x2="304.2" y2="589" stroke="#858585" stroke-width="1" stroke-dasharray="1.8,1.7"/><polygon points="297.9,397.8 310.5,397.8 304.2,405.3" fill="#111"/><line x1="352.7" y1="404" x2="352.7" y2="589" stroke="#858585" stroke-width="1" stroke-dasharray="1.8,1.7"/><polygon points="346.4,397.8 359.0,397.8 352.7,405.3" fill="#111"/><line x1="401.2" y1="404" x2="401.2" y2="589" stroke="#858585" stroke-width="1" stroke-dasharray="1.8,1.7"/><polygon points="394.9,397.8 407.5,397.8 401.2,405.3" fill="#111"/><line x1="449.8" y1="404" x2="449.8" y2="589" stroke="#858585" stroke-width="1" stroke-dasharray="1.8,1.7"/><polygon points="443.5,397.8 456.1,397.8 449.8,405.3" fill="#111"/><line x1="495.3" y1="404" x2="495.3" y2="589" stroke="#858585" stroke-width="1" stroke-dasharray="1.8,1.7"/><polygon points="489.0,397.8 501.6,397.8 495.3,405.3" fill="#111"/><line x1="586.9" y1="404" x2="586.9" y2="589" stroke="#858585" stroke-width="1" stroke-dasharray="1.8,1.7"/><polygon points="580.6,397.8 593.2,397.8 586.9,405.3" fill="#111"/><line x1="631.2" y1="404" x2="631.2" y2="589" stroke="#858585" stroke-width="1" stroke-dasharray="1.8,1.7"/><polygon points="624.9,397.8 637.5,397.8 631.2,405.3" fill="#111"/><line x1="676.0" y1="404" x2="676.0" y2="589" stroke="#858585" stroke-width="1" stroke-dasharray="1.8,1.7"/><polygon points="669.7,397.8 682.3,397.8 676.0,405.3" fill="#111"/><line x1="720.4" y1="404" x2="720.4" y2="589" stroke="#858585" stroke-width="1" stroke-dasharray="1.8,1.7"/><polygon points="714.1,397.8 726.7,397.8 720.4,405.3" fill="#111"/><line x1="806.1" y1="404" x2="806.1" y2="589" stroke="#858585" stroke-width="1" stroke-dasharray="1.8,1.7"/><polygon points="799.8,397.8 812.4,397.8 806.1,405.3" fill="#111"/><line x1="849.5" y1="404" x2="849.5" y2="589" stroke="#858585" stroke-width="1" stroke-dasharray="1.8,1.7"/><polygon points="843.2,397.8 852.0,397.8 849.5,405.3" fill="#111"/><clipPath id="cu"><rect x="139" y="398" width="713" height="90"/></clipPath><clipPath id="cl"><rect x="139" y="501" width="713" height="88"/></clipPath><path d="M139.0,442.4 L140.6,442.9 L142.3,442.9 L143.9,442.5 L145.5,442.7 L147.2,442.7 L148.8,442.8 L150.4,442.9 L152.0,442.4 L153.7,442.4 L155.3,442.7 L157.0,442.9 L158.7,443.1 L160.0,442.0 L161.4,445.2 L162.9,453.7 L164.3,466.1 L164.9,468.6 L165.6,465.6 L167.1,454.6 L168.6,446.6 L170.1,442.9 L172.6,440.3 L174.5,440.0 L176.4,439.7 L178.6,438.5 L180.7,436.9 L182.7,435.6 L183.9,437.4 L186.3,441.9 L188.7,442.8 L191.3,441.9 L192.8,442.4 L194.3,443.0 L195.9,442.4 L197.6,442.7 L199.2,442.9 L200.8,442.5 L202.5,442.9 L204.1,442.6 L205.8,442.8 L207.5,443.0 L208.8,441.9 L210.2,445.1 L211.7,453.6 L213.1,466.3 L213.7,468.8 L214.4,465.8 L215.9,454.6 L217.4,446.6 L218.9,442.9 L221.4,440.3 L223.3,440.0 L225.2,439.7 L227.4,438.5 L229.4,436.6 L231.5,435.6 L232.7,437.4 L235.1,441.9 L237.5,442.8 L240.1,441.9 L241.6,442.4 L243.1,442.5 L244.7,442.8 L246.3,443.0 L247.8,442.6 L249.4,442.5 L251.0,442.6 L252.6,442.6 L254.3,442.8 L256.0,443.0 L257.3,441.9 L258.7,445.1 L260.2,453.6 L261.6,466.3 L262.2,468.8 L262.9,465.8 L264.4,454.6 L265.9,446.6 L267.4,442.9 L269.9,440.3 L271.8,440.0 L273.7,439.7 L275.9,437.9 L277.9,436.7 L280.0,435.6 L281.2,437.4 L283.6,441.9 L286.0,442.8 L288.6,441.9 L290.1,442.4 L291.6,442.8 L293.2,442.8 L294.8,442.5 L296.4,442.5 L298.0,442.5 L299.6,442.6 L301.2,442.6 L302.9,442.8 L304.6,443.0 L305.9,441.9 L307.3,445.1 L308.8,453.6 L310.2,466.3 L310.8,468.8 L311.5,465.8 L313.0,454.6 L314.5,446.6 L316.0,442.9 L318.5,440.4 L320.4,440.1 L322.3,439.7 L324.5,438.2 L326.5,436.8 L328.6,435.8 L329.8,437.5 L332.2,441.9 L334.6,442.8 L337.2,441.9 L338.7,442.4 L340.2,443.0 L341.8,442.8 L343.4,442.8 L344.9,442.5 L346.5,443.0 L348.1,442.9 L349.7,442.6 L351.4,442.8 L353.1,443.0 L354.4,441.9 L355.8,445.1 L357.3,453.6 L358.7,466.3 L359.3,468.8 L360.0,465.8 L361.5,454.6 L363.0,446.6 L364.5,442.9 L367.0,440.3 L368.9,440.0 L370.8,439.7 L373.0,438.0 L375.0,436.8 L377.1,435.6 L378.3,437.4 L380.7,441.9 L383.1,442.8 L385.7,441.9 L387.2,442.4 L388.7,443.0 L390.3,442.9 L391.9,443.0 L393.4,442.6 L395.0,442.9 L396.6,442.8 L398.2,442.6 L399.9,442.8 L401.6,443.0 L402.9,441.9 L404.3,445.1 L405.8,453.6 L407.2,466.5 L407.8,469.0 L408.5,466.0 L410.0,454.6 L411.5,446.6 L413.0,442.9 L415.5,440.3 L417.4,440.0 L419.3,439.7 L421.5,438.1 L423.5,437.0 L425.6,435.6 L426.8,437.4 L429.2,441.9 L431.6,442.8 L434.2,441.9 L435.7,442.4 L437.2,443.1 L438.8,443.0 L440.4,442.7 L442.0,442.8 L443.6,442.3 L445.2,442.5 L446.8,442.6 L448.5,442.8 L450.2,443.0 L451.5,441.9 L452.9,445.1 L454.4,453.6 L455.8,466.5 L456.4,469.0 L457.1,466.0 L458.6,454.7 L460.1,446.7 L461.6,443.0 L464.1,440.4 L466.0,440.0 L467.9,439.7 L470.1,438.5 L472.1,436.9 L474.2,435.6 L475.4,437.4 L477.8,442.0 L480.2,442.9 L482.8,442.0 L484.3,442.4 L485.8,442.7 L487.4,442.9 L489.1,442.9 L490.7,442.9 L492.3,442.7 L494.0,442.9 L495.7,443.1 L497.0,442.0 L498.4,445.2 L499.9,453.7 L501.3,467.9 L501.9,470.4 L502.6,467.4 L504.1,453.3 L505.6,445.3 L507.1,441.6 L509.6,439.2 L511.5,438.9 L513.4,438.6 L515.6,437.2 L517.7,436.0 L519.7,434.8 L520.9,436.4 L523.3,440.7 L525.7,441.5 L528.3,440.7 L529.8,441.1 L531.3,441.5 L533.0,441.6 L534.6,441.4 L536.3,441.3 L538.0,441.3 L539.7,441.5 L541.4,441.7 L542.7,440.6 L544.1,443.8 L545.6,452.3 L547.0,464.9 L547.6,467.4 L548.3,464.4 L549.8,451.3 L551.3,443.3 L552.8,439.6 L555.3,437.4 L557.2,437.1 L559.1,436.8 L561.3,435.6 L563.3,434.2 L565.4,433.4 L566.6,434.9 L569.0,438.7 L571.4,439.5 L574.0,438.7 L575.5,439.1 L577.0,439.2 L578.7,439.6 L580.5,439.7 L582.2,439.4 L583.9,439.3 L585.6,439.5 L587.3,439.7 L588.6,438.6 L590.0,441.8 L591.5,450.3 L592.9,461.4 L593.5,463.9 L594.2,460.9 L595.7,446.8 L597.2,438.8 L598.7,435.1 L601.2,432.8 L603.1,432.5 L605.0,432.3 L607.2,431.0 L609.2,429.7 L611.3,428.8 L612.5,430.3 L614.9,434.2 L617.3,434.9 L619.9,434.2 L621.4,434.6 L622.9,435.0 L624.7,435.2 L626.4,435.0 L628.2,434.8 L629.9,434.9 L631.6,435.1 L632.9,434.1 L634.3,437.2 L635.8,445.8 L637.2,458.0 L637.8,460.5 L638.5,457.5 L640.0,444.2 L641.5,436.2 L643.0,432.5 L645.5,430.0 L647.4,429.6 L649.3,429.3 L651.5,428.0 L653.5,426.9 L655.6,425.4 L656.8,427.1 L659.2,431.5 L661.6,432.4 L664.2,431.5 L665.7,432.0 L667.2,432.2 L669.1,432.3 L671.1,432.6 L673.0,432.2 L674.7,432.4 L676.4,432.6 L677.7,431.5 L679.1,434.7 L680.6,443.2 L682.0,456.0 L682.6,458.5 L683.3,455.5 L684.8,446.8 L686.3,438.8 L687.8,435.1 L690.3,431.5 L692.2,431.1 L694.1,430.6 L696.3,428.7 L698.3,426.7 L700.4,424.9 L701.6,427.4 L704.0,433.8 L706.4,434.9 L709.0,433.8 L710.5,434.4 L712.0,434.8 L713.8,434.9 L715.6,435.1 L717.4,434.8 L719.1,434.9 L720.8,435.1 L722.1,434.1 L723.5,437.2 L725.0,445.8 L726.4,460.0 L727.0,462.5 L727.7,459.5 L729.2,450.2 L730.7,442.2 L732.2,438.5 L734.7,435.2 L736.6,434.8 L738.5,434.4 L740.7,432.3 L742.8,431.1 L744.8,429.2 L746.0,431.4 L748.4,437.3 L750.8,438.4 L753.4,437.3 L754.9,437.9 L756.4,438.6 L758.5,438.8 L760.5,438.7 L762.2,438.9 L763.9,439.1 L765.2,438.0 L766.6,441.2 L768.1,449.7 L769.5,465.3 L770.1,467.8 L770.8,464.8 L772.3,451.3 L773.8,443.3 L775.3,439.6 L777.8,436.8 L779.7,436.5 L781.6,436.2 L783.8,434.8 L785.8,433.4 L787.9,431.8 L789.1,433.7 L791.5,438.6 L793.9,439.5 L796.5,438.6 L798.0,439.0 L799.5,439.5 L801.3,439.4 L803.1,439.3 L804.8,439.5 L806.5,439.7 L807.8,438.6 L809.2,441.8 L810.7,450.3 L812.1,463.3 L812.7,465.8 L813.4,462.8 L814.9,452.7 L816.4,444.7 L817.9,441.0 L820.4,438.1 L822.3,437.7 L824.2,437.4 L826.4,435.8 L828.5,434.3 L830.5,432.8 L831.7,434.8 L834.1,439.9 L836.5,440.9 L839.1,439.9 L840.6,440.4 L842.1,440.8 L844.3,440.5 L846.5,440.7 L848.2,440.9 L849.9,441.1 L851.2,440.0 L852.6,443.2 L854.1,451.7 L855.5,463.5 L856.1,466.0 L856.8,463.0 L858.3,453.0 L859.8,445.0 L861.3,441.3 L863.8,438.4 L865.7,438.0 L867.6,437.6 L869.8,436.3 L871.8,434.6 L873.9,433.0 L875.1,435.0 L877.5,440.2 L879.9,441.2 L882.5,440.2 L884.0,440.7 L885.5,441.2" fill="none" stroke="#4db3e4" stroke-width="1.05" stroke-linejoin="round" clip-path="url(#cu)"/><path d="M139.0,546.4 L140.6,546.4 L142.3,545.8 L143.9,545.8 L145.5,546.3 L147.2,546.3 L148.8,546.2 L150.4,546.0 L152.0,546.2 L153.7,546.2 L155.3,546.1 L157.0,546.3 L158.7,546.5 L160.0,545.4 L161.4,548.6 L162.9,557.1 L164.3,567.1 L164.9,569.6 L165.6,566.6 L167.1,558.0 L168.6,550.0 L170.1,546.3 L172.6,544.2 L174.5,544.0 L176.4,543.7 L178.6,542.7 L180.7,541.4 L182.7,540.6 L183.9,542.0 L186.3,545.5 L188.7,546.2 L191.3,545.5 L192.8,545.8 L194.3,546.2 L195.9,546.1 L197.6,546.3 L199.2,546.4 L200.8,546.4 L202.5,546.1 L204.1,546.0 L205.8,546.2 L207.5,546.4 L208.8,545.3 L210.2,548.5 L211.7,557.0 L213.1,567.1 L213.7,569.6 L214.4,566.6 L215.9,558.0 L217.4,550.0 L218.9,546.3 L221.4,544.2 L223.3,544.0 L225.2,543.7 L227.4,542.6 L229.4,541.5 L231.5,540.6 L232.7,542.0 L235.1,545.5 L237.5,546.2 L240.1,545.5 L241.6,545.8 L243.1,545.9 L244.7,545.8 L246.3,546.1 L247.8,546.0 L249.4,546.0 L251.0,546.3 L252.6,546.0 L254.3,546.2 L256.0,546.4 L257.3,545.3 L258.7,548.5 L260.2,557.0 L261.6,567.1 L262.2,569.6 L262.9,566.6 L264.4,558.0 L265.9,550.0 L267.4,546.3 L269.9,544.2 L271.8,544.0 L273.7,543.7 L275.9,542.7 L277.9,541.7 L280.0,540.6 L281.2,542.0 L283.6,545.5 L286.0,546.2 L288.6,545.5 L290.1,545.8 L291.6,546.0 L293.2,545.8 L294.8,546.0 L296.4,545.8 L298.0,546.1 L299.6,546.4 L301.2,546.0 L302.9,546.2 L304.6,546.4 L305.9,545.3 L307.3,548.5 L308.8,557.0 L310.2,567.1 L310.8,569.6 L311.5,566.6 L313.0,558.0 L314.5,550.0 L316.0,546.3 L318.5,544.2 L320.4,544.0 L322.3,543.7 L324.5,542.8 L326.5,541.4 L328.6,540.6 L329.8,542.0 L332.2,545.5 L334.6,546.2 L337.2,545.5 L338.7,545.8 L340.2,546.5 L341.8,546.4 L343.4,546.3 L344.9,546.4 L346.5,546.3 L348.1,546.2 L349.7,546.0 L351.4,546.2 L353.1,546.4 L354.4,545.3 L355.8,548.5 L357.3,557.0 L358.7,566.9 L359.3,569.4 L360.0,566.4 L361.5,558.0 L363.0,550.0 L364.5,546.3 L367.0,544.2 L368.9,543.9 L370.8,543.7 L373.0,542.5 L375.0,541.9 L377.1,540.5 L378.3,541.9 L380.7,545.5 L383.1,546.2 L385.7,545.5 L387.2,545.8 L388.7,546.5 L390.3,545.9 L391.9,546.3 L393.4,546.3 L395.0,546.0 L396.6,546.1 L398.2,546.0 L399.9,546.2 L401.6,546.4 L402.9,545.3 L404.3,548.5 L405.8,557.0 L407.2,567.3 L407.8,569.8 L408.5,566.8 L410.0,557.6 L411.5,549.6 L413.0,545.9 L415.5,544.0 L417.4,543.7 L419.3,543.5 L421.5,542.5 L423.5,541.8 L425.6,540.6 L426.8,541.9 L429.2,545.1 L431.6,545.8 L434.2,545.1 L435.7,545.5 L437.2,545.8 L438.8,546.0 L440.4,545.6 L442.0,546.0 L443.6,545.9 L445.2,545.6 L446.8,545.6 L448.5,545.8 L450.2,546.0 L451.5,544.9 L452.9,548.1 L454.4,556.6 L455.8,567.5 L456.4,570.0 L457.1,567.0 L458.6,556.6 L460.1,548.6 L461.6,544.9 L464.1,543.1 L466.0,542.9 L467.9,542.7 L470.1,541.8 L472.1,541.2 L474.2,540.0 L475.4,541.1 L477.8,544.1 L480.2,544.8 L482.8,544.1 L484.3,544.5 L485.8,545.0 L487.4,544.6 L489.1,544.2 L490.7,544.1 L492.3,544.0 L494.0,544.2 L495.7,544.4 L497.0,543.3 L498.4,546.5 L499.9,555.0 L501.3,568.3 L501.9,570.8 L502.6,567.8 L504.1,554.7 L505.6,546.7 L507.1,543.0 L509.6,541.1 L511.5,540.9 L513.4,540.6 L515.6,539.8 L517.7,538.5 L519.7,537.8 L520.9,539.0 L523.3,542.2 L525.7,542.9 L528.3,542.2 L529.8,542.6 L531.3,543.2 L533.0,542.7 L534.6,543.1 L536.3,542.6 L538.0,542.7 L539.7,542.9 L541.4,543.1 L542.7,542.0 L544.1,545.2 L545.6,553.7 L547.0,563.6 L547.6,566.1 L548.3,563.1 L549.8,552.3 L551.3,544.3 L552.8,540.6 L555.3,538.6 L557.2,538.4 L559.1,538.2 L561.3,537.5 L563.3,536.3 L565.4,535.2 L566.6,536.5 L569.0,539.8 L571.4,540.5 L574.0,539.8 L575.5,540.1 L577.0,540.5 L578.7,540.5 L580.5,540.5 L582.2,540.4 L583.9,540.3 L585.6,540.5 L587.3,540.7 L588.6,539.6 L590.0,542.8 L591.5,551.3 L592.9,561.6 L593.5,564.1 L594.2,561.1 L595.7,547.8 L597.2,539.8 L598.7,536.1 L601.2,534.1 L603.1,533.9 L605.0,533.7 L607.2,532.6 L609.2,531.5 L611.3,530.8 L612.5,532.0 L614.9,535.3 L617.3,536.0 L619.9,535.3 L621.4,535.6 L622.9,536.0 L624.7,536.2 L626.4,536.0 L628.2,535.8 L629.9,536.0 L631.6,536.2 L632.9,535.1 L634.3,538.3 L635.8,546.8 L637.2,557.6 L637.8,560.1 L638.5,557.1 L640.0,546.4 L641.5,538.4 L643.0,534.7 L645.5,532.5 L647.4,532.2 L649.3,531.9 L651.5,530.4 L653.5,529.8 L655.6,528.5 L656.8,530.0 L659.2,533.8 L661.6,534.6 L664.2,533.8 L665.7,534.2 L667.2,534.8 L669.1,534.8 L671.1,534.1 L673.0,534.2 L674.7,534.4 L676.4,534.6 L677.7,533.5 L679.1,536.7 L680.6,545.2 L682.0,556.5 L682.6,559.0 L683.3,556.0 L684.8,547.8 L686.3,539.8 L687.8,536.1 L690.3,533.4 L692.2,533.1 L694.1,532.7 L696.3,531.4 L698.3,529.6 L700.4,528.5 L701.6,530.3 L704.0,535.1 L706.4,536.0 L709.0,535.1 L710.5,535.5 L712.0,536.1 L713.8,535.9 L715.6,536.0 L717.4,536.3 L719.1,536.5 L720.8,536.7 L722.1,535.6 L723.5,538.8 L725.0,547.3 L726.4,560.0 L727.0,562.5 L727.7,559.5 L729.2,551.8 L730.7,543.8 L732.2,540.0 L734.7,537.5 L736.6,537.1 L738.5,536.8 L740.7,535.7 L742.8,533.8 L744.8,532.8 L746.0,534.5 L748.4,539.1 L750.8,540.0 L753.4,539.1 L754.9,539.5 L756.4,540.0 L758.5,540.4 L760.5,540.3 L762.2,540.5 L763.9,540.7 L765.2,539.6 L766.6,542.8 L768.1,551.3 L769.5,565.5 L770.1,568.0 L770.8,565.0 L772.3,553.7 L773.8,545.7 L775.3,542.0 L777.8,539.8 L779.7,539.5 L781.6,539.2 L783.8,537.9 L785.8,536.7 L787.9,535.8 L789.1,537.3 L791.5,541.1 L793.9,541.9 L796.5,541.1 L798.0,541.5 L799.5,541.9 L801.3,541.8 L803.1,541.7 L804.8,541.9 L806.5,542.1 L807.8,541.0 L809.2,544.2 L810.7,552.7 L812.1,565.0 L812.7,567.5 L813.4,564.5 L814.9,556.3 L816.4,548.3 L817.9,544.6 L820.4,542.0 L822.3,541.6 L824.2,541.3 L826.4,540.2 L828.5,538.5 L830.5,537.2 L831.7,539.0 L834.1,543.6 L836.5,544.5 L839.1,543.6 L840.6,544.0 L842.1,544.7 L844.3,544.1 L846.5,544.3 L848.2,544.5 L849.9,544.7 L851.2,543.6 L852.6,546.8 L854.1,555.3 L855.5,565.5 L856.1,568.0 L856.8,565.0 L858.3,556.7 L859.8,548.7 L861.3,545.0 L863.8,542.5 L865.7,542.2 L867.6,541.9 L869.8,540.4 L871.8,539.0 L873.9,538.0 L875.1,539.7 L877.5,544.0 L879.9,544.9 L882.5,544.0 L884.0,544.5 L885.5,544.9" fill="none" stroke="#4db3e4" stroke-width="1.05" stroke-linejoin="round" clip-path="url(#cl)"/><path d="M116.7,442.5 H123 V419 H129.7 V442.5 H134.7" fill="none" stroke="#8a8a8a" stroke-width="1"/><path d="M117,545.5 H122.5 V522.5 H129.5 V545.5 H134.5" fill="none" stroke="#8a8a8a" stroke-width="1"/><clipPath id="cr"><rect x="139" y="589" width="713" height="13"/></clipPath><rect x="163.9" y="591.3" width="1.7" height="10.2" fill="#454545"/><rect x="212.1" y="591.3" width="1.7" height="10.2" fill="#454545"/><rect x="260.6" y="591.3" width="1.7" height="10.2" fill="#454545"/><rect x="309.2" y="591.3" width="1.7" height="10.2" fill="#454545"/><rect x="357.3" y="591.3" width="1.7" height="10.2" fill="#454545"/><rect x="405.9" y="591.3" width="1.7" height="10.2" fill="#454545"/><rect x="454.8" y="591.3" width="1.7" height="10.2" fill="#454545"/><rect x="499.8" y="591.3" width="1.7" height="10.2" fill="#454545"/><rect x="545.7" y="591.3" width="1.7" height="10.2" fill="#454545"/><rect x="591.2" y="591.3" width="1.7" height="10.2" fill="#454545"/><rect x="636.4" y="591.3" width="1.7" height="10.2" fill="#454545"/><rect x="681.1" y="591.3" width="1.7" height="10.2" fill="#454545"/><rect x="724.6" y="591.3" width="1.7" height="10.2" fill="#454545"/><rect x="768.2" y="591.3" width="1.7" height="10.2" fill="#454545"/><rect x="810.9" y="591.3" width="1.7" height="10.2" fill="#454545"/><rect x="530.4" y="398" width="1.3" height="204" fill="#f0875c"/><polygon points="528.3,398 533.7,398 531,401.5" fill="#e82808"/><polygon points="148,614.7 153.2,610.5 153.2,618.9" fill="#111"/><polygon points="124.8,614.7 128.9,610.8 128.9,618.7" fill="#111"/><rect x="123.2" y="610.8" width="1.8" height="7.9" fill="#111"/><polygon points="819.6,614.7 814.6,610.6 814.6,618.8" fill="#111"/><polygon points="842,614.7 838,610.8 838,618.7" fill="#111"/><rect x="841.2" y="610.8" width="1.9" height="7.9" fill="#111"/><polygon points="655,659 664,659 659.5,654.5" fill="#111"/></svg></body></html>
